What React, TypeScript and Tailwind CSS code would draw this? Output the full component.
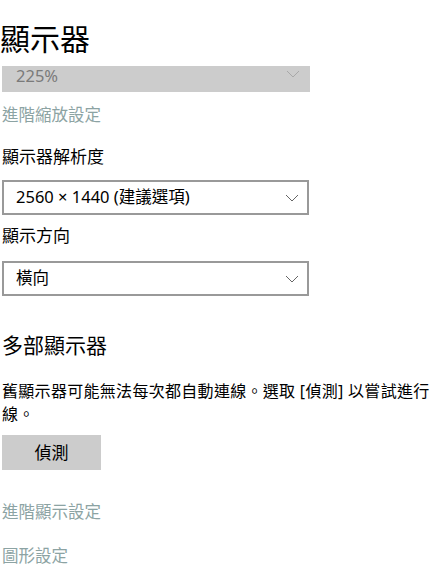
import React from "react";

const Chevron = ({ color }: { color: string }) => (
  <svg width="14" height="8" viewBox="0 0 14 8" fill="none">
    <polyline points="1,1 7,7 13,1" stroke={color} strokeWidth="1" />
  </svg>
);

const Select = ({ value }: { value: string }) => (
  <div className="ml-[2px] flex h-[35px] w-[307px] items-center justify-between border-2 border-[#999999] bg-white pl-[12px] pr-[8px] text-[16.5px] text-black">
    <span>{value}</span>
    <Chevron color="#666666" />
  </div>
);

const App = () => {
  return (
    <div
      className="h-[586px] w-[433px] overflow-hidden bg-white text-black"
      style={{ fontFamily: '"Noto Sans", "Noto Sans CJK TC", sans-serif' }}
    >
      {/* header */}
      <h1 className="mt-[19px] text-[30px] leading-[40px] font-normal">顯示器</h1>

      {/* scaling (disabled) */}
      <div className="ml-[2px] mt-[7px] flex h-[26px] w-[308px] items-start justify-between bg-[#cccccc] pl-[14px] pr-[10px]">
        <span className="text-[16.5px] leading-[20px] text-[#7a7a7a]">225%</span>
        <div className="pt-[4px]">
          <Chevron color="#a8a8a8" />
        </div>
      </div>

      <a className="mt-[12px] block pl-[2px] text-[16.5px] leading-[22px] text-[#8ca3a3]">進階縮放設定</a>

      {/* resolution */}
      <div className="mt-[20px] pl-[2px] text-[17px] leading-[22px]">顯示器解析度</div>
      <div className="mt-[12px]">
        <Select value="2560 × 1440 (建議選項)" />
      </div>

      {/* orientation */}
      <div className="mt-[10px] pl-[2px] text-[17px] leading-[22px]">顯示方向</div>
      <div className="mt-[14px]">
        <Select value="橫向" />
      </div>

      {/* multiple displays */}
      <h2 className="mt-[35px] pl-[2px] text-[21px] leading-[28px] font-normal">多部顯示器</h2>
      <p className="mt-[21px] whitespace-nowrap pl-[2px] text-[16px] leading-[23px] tracking-[0.3px]">
        舊顯示器可能無法每次都自動連線。選取 [偵測] 以嘗試進行
        <br />
        線。
      </p>
      <button className="ml-[2px] mt-[9px] block h-[35px] w-[99px] bg-[#cccccc] text-[17px] text-black">
        偵測
      </button>

      <a className="mt-[31px] block pl-[2px] text-[16.5px] leading-[22px] text-[#8ca3a3]">進階顯示設定</a>
      <a className="mt-[22px] block pl-[2px] text-[16.5px] leading-[22px] text-[#8ca3a3]">圖形設定</a>
    </div>
  );
};

export default App;
